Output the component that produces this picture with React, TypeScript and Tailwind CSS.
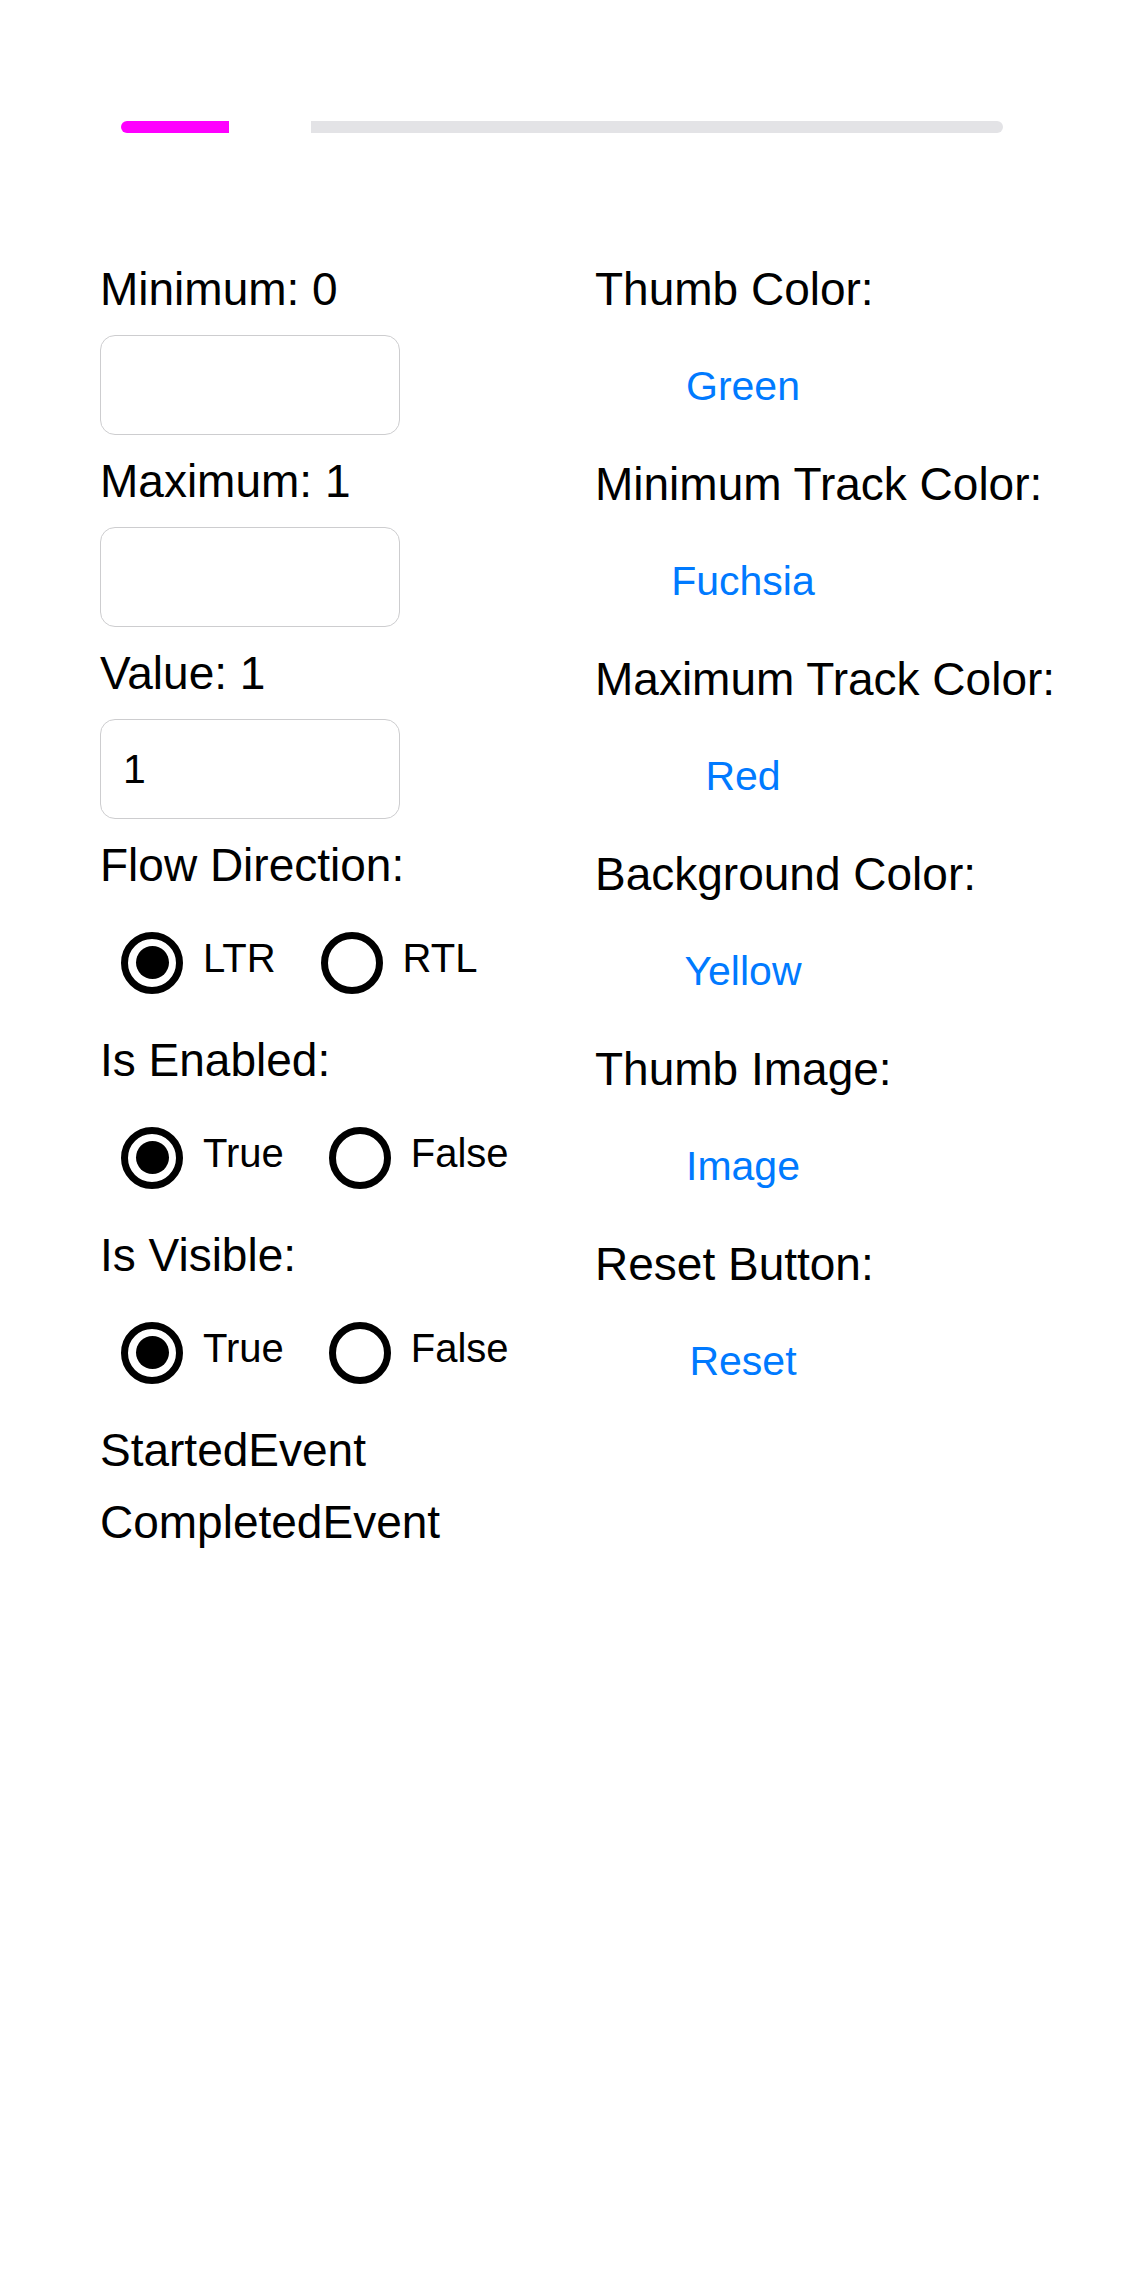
import React from 'react';

const font = { fontFamily: '"Liberation Sans", Arial, sans-serif' };

const Label = ({ children }: { children: React.ReactNode }) => (
  <div className="h-[92px] flex items-center text-[46px] text-black leading-none">{children}</div>
);

const Entry = ({ value }: { value?: string }) => (
  <div className="h-[100px] w-[300px] border border-[#cdcdcf] rounded-[15px] px-[22px] flex items-center text-[41px] text-black leading-none">
    {value}
  </div>
);

const Radio = ({ label, checked }: { label: string; checked?: boolean }) => (
  <div className="flex items-center gap-[20px] pl-[21px] pr-[24px]">
    <div className="w-[62px] h-[62px] rounded-full border-[7px] border-black flex items-center justify-center">
      {checked && <div className="w-[33px] h-[33px] rounded-full bg-black" />}
    </div>
    <span className="text-[40px] leading-none text-black pb-[10px]">{label}</span>
  </div>
);

const RadioRow = ({ a, b }: { a: string; b: string }) => (
  <div className="h-[103px] flex items-center">
    <Radio label={a} checked />
    <Radio label={b} />
  </div>
);

const RightLabel = ({ children }: { children: React.ReactNode }) => (
  <div className="h-[97px] flex items-center text-[46px] text-black leading-none whitespace-nowrap">{children}</div>
);

const LinkButton = ({ children }: { children: React.ReactNode }) => (
  <button className="h-[98px] w-[296px] flex items-center justify-center text-[41px] text-[#007aff] leading-none">
    {children}
  </button>
);

export default function App() {
  return (
    <div className="w-[1124px] min-h-[2286px] bg-white" style={font}>
      {/* slider */}
      <div className="pt-[121px] pl-[121px] flex items-center">
        <div className="h-[12px] w-[108px] bg-[#ff00ff] rounded-l-full" />
        <div className="w-[82px]" />
        <div className="h-[12px] w-[692px] bg-[#e3e3e6] rounded-r-full" />
      </div>

      <div className="mt-[107px] pl-[100px] grid grid-cols-[495px_1fr]">
        <div className="mt-[3px] flex flex-col">
          <Label>Minimum: 0</Label>
          <Entry />
          <Label>Maximum: 1</Label>
          <Entry />
          <Label>Value: 1</Label>
          <Entry value="1" />
          <Label>Flow Direction:</Label>
          <RadioRow a="LTR" b="RTL" />
          <Label>Is Enabled:</Label>
          <RadioRow a="True" b="False" />
          <Label>Is Visible:</Label>
          <RadioRow a="True" b="False" />
          <div className="mt-[10px] h-[72px] flex items-center text-[46px] leading-none">StartedEvent</div>
          <div className="h-[72px] flex items-center text-[46px] leading-none">CompletedEvent</div>
        </div>

        <div className="flex flex-col">
          <RightLabel>Thumb Color:</RightLabel>
          <LinkButton>Green</LinkButton>
          <RightLabel>Minimum Track Color:</RightLabel>
          <LinkButton>Fuchsia</LinkButton>
          <RightLabel>Maximum Track Color:</RightLabel>
          <LinkButton>Red</LinkButton>
          <RightLabel>Background Color:</RightLabel>
          <LinkButton>Yellow</LinkButton>
          <RightLabel>Thumb Image:</RightLabel>
          <LinkButton>Image</LinkButton>
          <RightLabel>Reset Button:</RightLabel>
          <LinkButton>Reset</LinkButton>
        </div>
      </div>
    </div>
  );
}
